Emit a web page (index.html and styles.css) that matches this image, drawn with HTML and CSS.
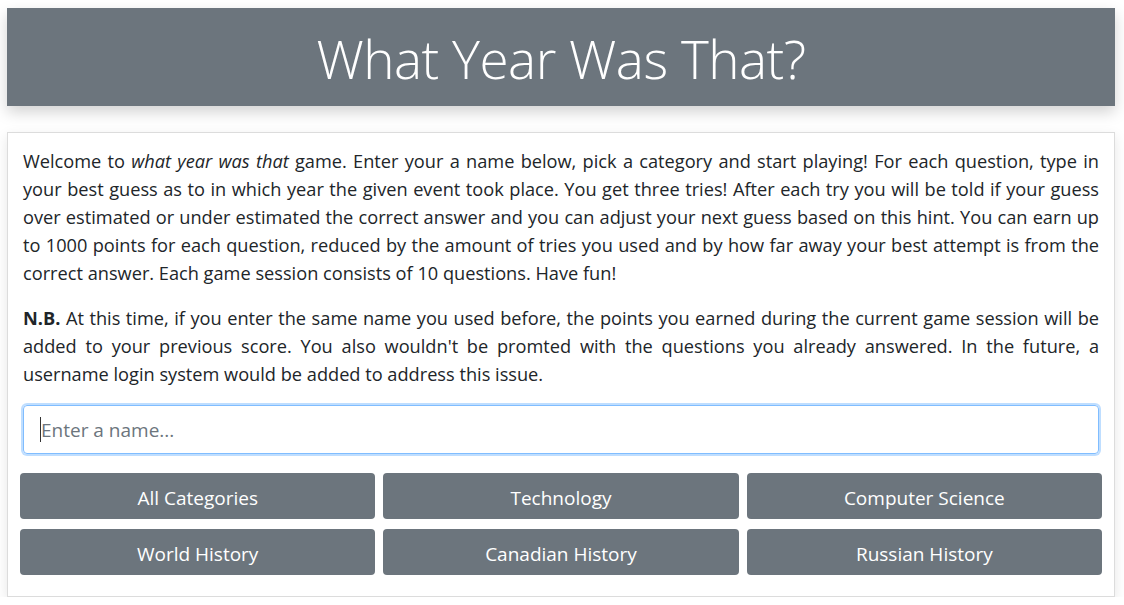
FILE: index.html
```html
<!DOCTYPE html>
<html>
<head>
<meta charset="utf-8">
<link rel="stylesheet" href="styles.css">
</head>
<body>
<header class="banner">
  <h1 class="title">What Year Was That?</h1>
</header>
<main class="card">
  <p class="intro">Welcome to <em>what year was that</em> game. Enter your a name below, pick a category and start playing! For each question, type in your best guess as to in which year the given event took place. You get three tries! After each try you will be told if your guess over estimated or under estimated the correct answer and you can adjust your next guess based on this hint. You can earn up to 1000 points for each question, reduced by the amount of tries you used and by how far away your best attempt is from the correct answer. Each game session consists of 10 questions. Have fun!</p>
  <p class="intro"><strong>N.B.</strong> At this time, if you enter the same name you used before, the points you earned during the current game session will be added to your previous score. You also wouldn't be promted with the questions you already answered. In the future, a username login system would be added to address this issue.</p>
  <div class="name-field"><span class="caret"></span><span class="placeholder">Enter a name...</span></div>
  <div class="categories">
    <button class="cat">All Categories</button>
    <button class="cat">Technology</button>
    <button class="cat">Computer Science</button>
    <button class="cat">World History</button>
    <button class="cat">Canadian History</button>
    <button class="cat">Russian History</button>
  </div>
</main>
</body>
</html>
```
FILE: styles.css
```css
html, body { margin: 0; padding: 0; background: #fff; }
body {
  padding: 8px 9px 0 7px;
  font-family: "Open Sans", "Noto Sans", sans-serif;
  color: #212529;
}
.banner {
  height: 98px;
  background: #6c757d;
  box-shadow: 0 6px 14px rgba(0,0,0,0.18);
  display: flex;
  align-items: center;
  justify-content: center;
}
.title {
  margin: 0;
  color: #fff;
  font-weight: 300;
  font-size: 53px;
  letter-spacing: -0.5px;
  line-height: 1;
  padding-top: 2px;
}
.card {
  margin-top: 26px;
  border: 1px solid #dcdcdc;
  box-shadow: 0 4px 12px rgba(0,0,0,0.10);
  padding: 14px 15px 20px;
  height: 465px;
  box-sizing: border-box;
}
.intro {
  margin: 0 0 17px;
  font-size: 18.2px;
  line-height: 28px;
  text-align: justify;
}
.intro strong { font-weight: 700; }
.name-field {
  margin-top: 0;
  height: 49px;
  box-sizing: border-box;
  border: 1px solid #80bdff;
  border-radius: 4px;
  box-shadow: 0 0 0 2px rgba(0,123,255,0.25);
  display: flex;
  align-items: center;
  padding-left: 16px;
  font-size: 19px;
}
.caret { width: 1px; height: 25px; background: #333; margin-right: 0; }
.placeholder { color: #6c757d; }
.categories {
  margin: 19px -3px 0;
  display: grid;
  grid-template-columns: repeat(3, 1fr);
  column-gap: 8px;
  row-gap: 10px;
}
.cat {
  height: 46px;
  border: none;
  border-radius: 4px;
  background: #6c757d;
  color: #fff;
  font-family: "Open Sans", "Noto Sans", sans-serif;
  font-size: 19px;
  padding: 3px 0 0;
}
```
